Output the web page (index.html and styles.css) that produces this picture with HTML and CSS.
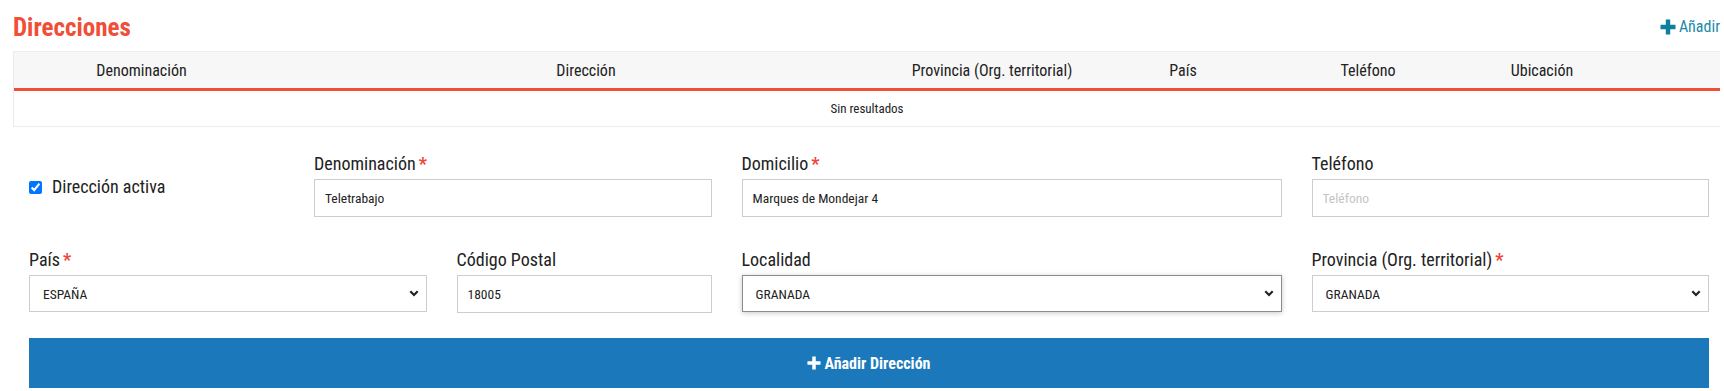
FILE: index.html
```html
<!DOCTYPE html>
<html lang="es">
<head>
<meta charset="utf-8">
<title>Direcciones</title>
<link rel="stylesheet" href="styles.css">
</head>
<body>
<div class="page">
  <div class="head">
    <h2 class="title">Direcciones</h2>
    <a class="add-link" href="#">
      <svg class="plus plus-teal" viewBox="0 0 16 16" width="16" height="16"><path d="M5.8 0.5h4.4v5.3h5.3v4.4h-5.3v5.3h-4.4v-5.3h-5.3v-4.4h5.3z"/></svg>
      <span>Añadir</span>
    </a>
  </div>

  <div class="table">
    <div class="thead">
      <div class="th">Denominación</div>
      <div class="th">Dirección</div>
      <div class="th">Provincia (Org. territorial)</div>
      <div class="th">País</div>
      <div class="th">Teléfono</div>
      <div class="th">Ubicación</div>
      <div class="th"></div>
    </div>
    <div class="tbody">Sin resultados</div>
  </div>

  <form class="form">
    <div class="cell span2 check-cell">
      <label class="check"><input type="checkbox" checked><span>Dirección activa</span></label>
    </div>
    <div class="cell span3">
      <label class="lbl">Denominación<span class="req">*</span></label>
      <input class="ctrl" type="text" value="Teletrabajo">
    </div>
    <div class="cell span4">
      <label class="lbl">Domicilio<span class="req">*</span></label>
      <input class="ctrl" type="text" value="Marques de Mondejar 4">
    </div>
    <div class="cell span3">
      <label class="lbl">Teléfono</label>
      <input class="ctrl" type="text" placeholder="Teléfono">
    </div>

    <div class="cell span3">
      <label class="lbl">País<span class="req">*</span></label>
      <div class="sel-wrap">
        <select class="ctrl sel"><option>ESPAÑA</option></select>
        <svg class="chev" viewBox="0 0 10 7" width="10" height="7"><path d="M1.3 1.3L5 5l3.7-3.7"/></svg>
      </div>
    </div>
    <div class="cell span2">
      <label class="lbl">Código Postal</label>
      <input class="ctrl" type="text" value="18005">
    </div>
    <div class="cell span4">
      <label class="lbl">Localidad</label>
      <div class="sel-wrap">
        <select class="ctrl sel focused"><option>GRANADA</option></select>
        <svg class="chev" viewBox="0 0 10 7" width="10" height="7"><path d="M1.3 1.3L5 5l3.7-3.7"/></svg>
      </div>
    </div>
    <div class="cell span3">
      <label class="lbl">Provincia (Org. territorial)<span class="req">*</span></label>
      <div class="sel-wrap">
        <select class="ctrl sel"><option>GRANADA</option></select>
        <svg class="chev" viewBox="0 0 10 7" width="10" height="7"><path d="M1.3 1.3L5 5l3.7-3.7"/></svg>
      </div>
    </div>

    <button class="cell span12 btn" type="button">
      <svg class="plus plus-white" viewBox="0 0 16 16" width="14" height="14"><path d="M6 0.5h4v5.5h5.5v4h-5.5v5.5h-4v-5.5h-5.5v-4h5.5z"/></svg>
      <span>Añadir Dirección</span>
    </button>
  </form>
</div>
</body>
</html>
```

FILE: styles.css
```css
* { box-sizing: border-box; }

html, body {
  margin: 0;
  padding: 0;
  background: #fff;
  overflow: hidden;
}

body {
  font-family: "Roboto Condensed", "Liberation Sans Narrow", Roboto, sans-serif;
  color: #222;
}

.page {
  padding: 0 4px 0 13px;
}

.head {
  height: 51px;
  display: flex;
  align-items: center;
  justify-content: space-between;
}

.title {
  margin: 0;
  font-size: 25px;
  font-weight: 700;
  color: #f04e37;
  line-height: 30px;
  padding-top: 5px;
}

.add-link {
  display: flex;
  align-items: center;
  gap: 3px;
  color: #1a8aaa;
  font-size: 16px;
  text-decoration: none;
  padding-top: 2px;
}

.plus { display: block; }
.plus-teal { fill: #0e7f9e; }
.plus-white { fill: #fff; }

.table {
  border: 1px solid #ececec;
  border-right: none;
}

.thead {
  display: grid;
  grid-template-columns: 255px 634px 178px 204px 166px 182px 1fr;
  height: 39px;
  background: #f7f7f7;
  border-bottom: 3px solid #f04e37;
  align-items: center;
}

.th {
  text-align: center;
  font-size: 16px;
  color: #222;
}

.tbody {
  height: 35px;
  display: flex;
  align-items: center;
  justify-content: center;
  font-size: 13px;
  color: #222;
}

.form {
  margin: 26px 11px 0 16px;
  display: grid;
  grid-template-columns: repeat(12, 1fr);
  column-gap: 30px;
  row-gap: 32px;
}

.span2 { grid-column: span 2; }
.span3 { grid-column: span 3; }
.span4 { grid-column: span 4; }
.span12 { grid-column: span 12; }

.check-cell {
  padding-top: 23px;
}

.check {
  display: flex;
  align-items: center;
  gap: 10px;
  font-size: 18px;
  line-height: 22px;
}

.check input {
  margin: 0;
  width: 13px;
  height: 13px;
}

.lbl {
  display: block;
  font-size: 18px;
  line-height: 22px;
  margin-bottom: 4px;
  color: #222;
}

.req {
  color: #f0473a;
  font-weight: 700;
  margin-left: 3px;
}

.ctrl {
  display: block;
  width: 100%;
  height: 38px;
  border: 1px solid #cdcdcd;
  border-radius: 0;
  background: #fff;
  padding: 0 10px;
  font-family: inherit;
  font-size: 13.5px;
  color: #222;
  outline: none;
}

.ctrl::placeholder {
  color: #c4c4c4;
}

.sel-wrap {
  position: relative;
}

.sel {
  appearance: none;
  -webkit-appearance: none;
  padding: 0 13px;
  height: 37px;
}

.sel.focused {
  border-color: #8c8c8c;
  box-shadow: 0 1px 5px rgba(0, 0, 0, 0.22);
}

.chev {
  position: absolute;
  right: 8px;
  top: 15px;
  fill: none;
  stroke: #222;
  stroke-width: 2.2;
}

.btn {
  margin-top: -7px;
  height: 50px;
  border: none;
  background: #1a78bb;
  color: #fff;
  font-family: inherit;
  font-size: 16px;
  font-weight: 700;
  display: flex;
  align-items: center;
  justify-content: center;
  gap: 3px;
  cursor: pointer;
}
```
